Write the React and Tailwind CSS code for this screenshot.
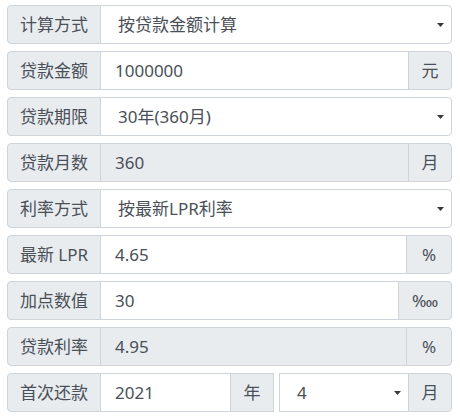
const border = "border border-[#ced4da]";

function Label({ children }) {
  return (
    <div className={`w-[94px] shrink-0 flex items-center justify-center bg-[#e9ecef] rounded-l ${border}`}>
      {children}
    </div>
  );
}

function Caret() {
  return (
    <svg width="7" height="4" viewBox="0 0 7 4" className="shrink-0">
      <path d="M0 0h7L3.5 4z" fill="#343a40" />
    </svg>
  );
}

function Select({ value, className = "" }) {
  return (
    <div className={`flex-1 -ml-px flex items-center justify-between pl-[17px] pr-[7px] bg-white ${border} ${className}`}>
      <span>{value}</span>
      <Caret />
    </div>
  );
}

function Field({ value, readOnly, className = "" }) {
  return (
    <div
      className={`flex-1 -ml-px flex items-center pl-[14px] ${border} ${
        readOnly ? "bg-[#e9ecef]" : "bg-white"
      } ${className}`}
    >
      {value}
    </div>
  );
}

function Addon({ children, w, className = "" }) {
  return (
    <div className={`${w} shrink-0 -ml-px flex items-center justify-center bg-[#e9ecef] ${border} ${className}`}>
      {children}
    </div>
  );
}

function Row({ children }) {
  return <div className="flex h-[39px]">{children}</div>;
}

export default function App() {
  return (
    <div className="w-[460px] h-[417px] bg-white pt-[5px] pl-[7px] font-['Noto_Sans','Noto_Sans_CJK_SC',sans-serif] text-[17px] text-[#495057]">
      <div className="w-[445px] flex flex-col gap-[7px]">
        <Row>
          <Label>计算方式</Label>
          <Select value="按贷款金额计算" className="rounded-r" />
        </Row>

        <Row>
          <Label>贷款金额</Label>
          <Field value="1000000" />
          <Addon w="w-[44px]" className="rounded-r">元</Addon>
        </Row>

        <Row>
          <Label>贷款期限</Label>
          <Select value="30年(360月)" className="rounded-r" />
        </Row>

        <Row>
          <Label>贷款月数</Label>
          <Field value="360" readOnly />
          <Addon w="w-[44px]" className="rounded-r">月</Addon>
        </Row>

        <Row>
          <Label>利率方式</Label>
          <Select value="按最新LPR利率" className="rounded-r" />
        </Row>

        <Row>
          <Label>最新 LPR</Label>
          <Field value="4.65" />
          <Addon w="w-[46px]" className="rounded-r">%</Addon>
        </Row>

        <Row>
          <Label>加点数值</Label>
          <Field value="30" />
          <Addon w="w-[54px]" className="rounded-r">‱</Addon>
        </Row>

        <Row>
          <Label>贷款利率</Label>
          <Field value="4.95" readOnly />
          <Addon w="w-[46px]" className="rounded-r">%</Addon>
        </Row>

        {/* 首次还款: year + month */}
        <Row>
          <Label>首次还款</Label>
          <Field value="2021" className="flex-none w-[131px]" />
          <Addon w="w-[44px]">年</Addon>
          <div className="w-[5px] shrink-0" />
          <Select value="4" className="ml-0" />
          <Addon w="w-[44px]" className="rounded-r">月</Addon>
        </Row>
      </div>
    </div>
  );
}
